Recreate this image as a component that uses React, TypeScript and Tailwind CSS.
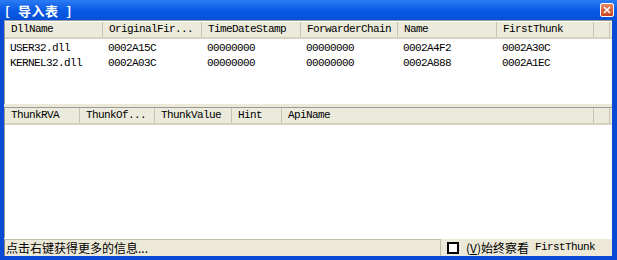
const mono = { fontFamily: '"Liberation Mono", "DejaVu Sans Mono", monospace' };

const topCols = [
  { name: "DllName", w: "w-[98px]" },
  { name: "OriginalFir...", w: "w-[99px]" },
  { name: "TimeDateStamp", w: "w-[99px]" },
  { name: "ForwarderChain", w: "w-[97px]" },
  { name: "Name", w: "w-[99px]" },
  { name: "FirstThunk", w: "w-[97px]" },
];

const topRows = [
  ["USER32.dll", "0002A15C", "00000000", "00000000", "0002A4F2", "0002A30C"],
  ["KERNEL32.dll", "0002A03C", "00000000", "00000000", "0002A888", "0002A1EC"],
];

const bottomCols = [
  { name: "ThunkRVA", w: "w-[75px]" },
  { name: "ThunkOf...", w: "w-[75px]" },
  { name: "ThunkValue", w: "w-[77px]" },
  { name: "Hint", w: "w-[50px]" },
  { name: "ApiName", w: "w-[312px]" },
];

function Header({ cols }: { cols: { name: string; w: string }[] }) {
  return (
    <div className="flex h-[17px] shrink-0 border-b-2 border-[#D6D2C2] bg-[#EBEADB]">
      {cols.map((c) => (
        <div
          key={c.name}
          className={`${c.w} flex shrink-0 items-center border-r border-[#C7C5B2] pl-[6px] text-[11px] tracking-[-0.6px] text-black`}
          style={mono}
        >
          {c.name}
        </div>
      ))}
      <div className="w-[16px] shrink-0 border-r border-[#C7C5B2]" />
    </div>
  );
}

export default function App() {
  return (
    <div
      className="flex h-[260px] w-[617px] flex-col bg-[#0A4BD6]"
      style={{ fontFamily: '"Noto Sans CJK SC", sans-serif' }}
    >
      {/* title bar */}
      <div className="flex h-[20px] shrink-0 items-center justify-between bg-gradient-to-b from-[#2C7BF5] via-[#0A5BE6] to-[#0750D8] pl-[5px] pr-[3px]">
        <span className="flex gap-[8px] text-[13px] font-bold leading-none text-white">
          <span>[</span>
          <span className="tracking-[0.5px]">导入表</span>
          <span>]</span>
        </span>
        <div className="flex h-[14px] w-[14px] items-center justify-center rounded-[2px] border border-white bg-gradient-to-b from-[#E8845E] to-[#C9431F]">
          <svg width="8" height="8" viewBox="0 0 8 8">
            <path d="M1 1 L7 7 M7 1 L1 7" stroke="white" strokeWidth="1.6" />
          </svg>
        </div>
      </div>

      <div className="mb-[4px] ml-[4px] mr-[5px] flex flex-1 flex-col bg-[#ECE9D8]">
        {/* top list */}
        <div className="flex h-[84px] shrink-0 flex-col border-l border-t border-[#9A9A9A] bg-white">
          <div className="mt-[1px]">
            <Header cols={topCols} />
          </div>
          <div className="pt-[2px]">
            {topRows.map((r) => (
              <div key={r[0]} className="flex h-[15px] items-center text-[11px] tracking-[-0.6px] text-black" style={mono}>
                {r.map((v, i) => (
                  <div key={i} className={`${topCols[i].w} shrink-0 pl-[5px]`}>
                    {v}
                  </div>
                ))}
              </div>
            ))}
          </div>
        </div>

        {/* splitter */}
        <div className="h-[4px] shrink-0 border-b border-[#9A9A9A] bg-[#ECE9D8]" />

        {/* bottom list */}
        <div className="flex flex-1 flex-col border-l border-[#9A9A9A] bg-white">
          <Header cols={bottomCols} />
        </div>

        {/* status bar */}
        <div className="flex h-[18px] shrink-0 items-center border-t border-white bg-[#ECE9D8]">
          <div className="flex h-full w-[437px] items-center border-l border-r border-t border-[#C0BDAA] border-l-[#808080] pl-[1px] text-[12px] leading-none text-black">
            点击右键获得更多的信息...
          </div>
          <div className="ml-[6px] h-[12px] w-[12px] border-2 border-black bg-white" />
          <span className="ml-[7px] text-[12px] leading-none text-black">
            (<span className="underline">V</span>)始终察看
          </span>
          <span className="ml-[6px] text-[11px] leading-none tracking-[-0.6px] text-black" style={mono}>
            FirstThunk
          </span>
        </div>
      </div>
    </div>
  );
}
